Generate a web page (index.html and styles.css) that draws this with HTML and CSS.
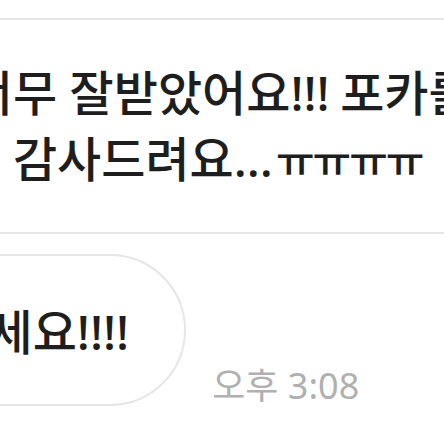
FILE: index.html
```html
<!DOCTYPE html>
<html lang="ko">
<head>
<meta charset="utf-8">
<link rel="stylesheet" href="styles.css">
</head>
<body>
<div class="chat">
  <div class="bubble bubble-big">
    <p class="line">정말 너무 잘받았어요<span class="bang">!!!</span> 포카를 이렇게 예쁘게</p>
    <p class="line">너무나 감사드려요...<span class="cry">ㅠㅠㅠㅠ</span></p>
  </div>
  <div class="row">
    <div class="bubble bubble-small">
      <p class="line">번창하세요!!!!</p>
    </div>
    <span class="time">오후 3:08</span>
  </div>
</div>
</body>
</html>
```
FILE: styles.css
```css
html, body {
  margin: 0;
  padding: 0;
  background: #ffffff;
  overflow: hidden;
  width: 444px;
  height: 444px;
}
.chat {
  padding-top: 18px;
  font-family: "Noto Sans", "Noto Sans CJK KR", sans-serif;
  color: #1e1e1e;
}
.bubble {
  border: 2px solid #e6e6e6;
  background: #ffffff;
  box-sizing: border-box;
}
.line {
  margin: 0;
  font-size: 48px;
  font-weight: 500;
  line-height: 66px;
  white-space: nowrap;
}
.bang {
  margin-right: -2px;
}
.cry {
  font-size: 42px;
  letter-spacing: -2px;
  margin-left: 3px;
}
.bubble-big {
  margin-left: -134px;
  width: 900px;
  height: 216px;
  border-radius: 80px;
  padding: 40px 0 0 0;
}
.row {
  display: flex;
  align-items: flex-end;
  margin-top: 20px;
}
.bubble-small {
  margin-left: -146px;
  height: 152px;
  border-radius: 0 76px 76px 0;
  padding: 43px 55px 0 0;
  flex: none;
}
.time {
  margin-left: 26px;
  margin-bottom: 0;
  font-size: 36px;
  line-height: 40px;
  color: #b0b0b0;
  white-space: nowrap;
}
```
